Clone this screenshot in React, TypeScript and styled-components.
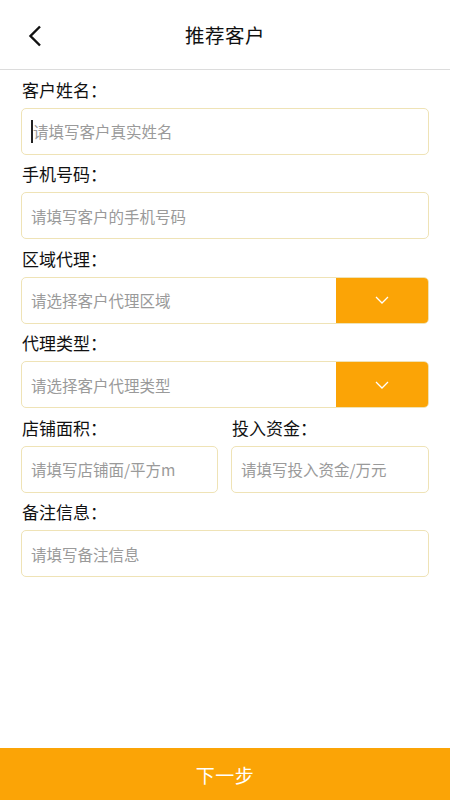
import React from "react";
import styled, { createGlobalStyle } from "styled-components";

const Global = createGlobalStyle`
  html, body { margin: 0; padding: 0; background: #fff; }
  body { font-family: "Noto Sans CJK SC", "Noto Sans", sans-serif; }
  * { box-sizing: border-box; }
`;

const Page = styled.div`
  width: 450px;
  height: 800px;
  display: flex;
  flex-direction: column;
  background: #fff;
`;

const Header = styled.header`
  height: 70px;
  flex-shrink: 0;
  display: flex;
  align-items: center;
  justify-content: center;
  position: relative;
  border-bottom: 1px solid #dcdcdc;
`;

const BackButton = styled.div`
  position: absolute;
  left: 26px;
  top: 23px;
  width: 18px;
  height: 26px;
  display: flex;
  align-items: center;
  justify-content: center;
`;

const Title = styled.h1`
  margin: 0;
  font-size: 19.5px;
  font-weight: 400;
  color: #111;
  letter-spacing: 0.5px;
  padding-bottom: 1px;
`;

const Form = styled.div`
  padding: 0 21px;
  display: flex;
  flex-direction: column;
`;

const Row = styled.div`
  display: grid;
  grid-template-columns: 197px 198px;
  column-gap: 13px;
`;

const Field = styled.div`
  display: flex;
  flex-direction: column;
`;

const Label = styled.div`
  height: 37.5px;
  display: flex;
  align-items: center;
  padding-left: 1px;
  padding-top: 1px;
  font-size: 17px;
  color: #111;
`;

const Box = styled.div`
  height: 47px;
  border: 1px solid #efe3b6;
  border-radius: 5px;
  display: flex;
  align-items: stretch;
  overflow: hidden;
  background: #fff;
`;

const Placeholder = styled.div`
  flex: 1;
  display: flex;
  align-items: center;
  padding-left: 9px;
  font-size: 15.5px;
  color: #9a9a9a;
  white-space: nowrap;
`;

const Caret = styled.span`
  display: inline-block;
  width: 2px;
  height: 23px;
  background: #222;
`;

const DropButton = styled.div`
  width: 92px;
  background: #fba406;
  display: flex;
  align-items: center;
  justify-content: center;
`;

const Footer = styled.div`
  margin-top: auto;
  height: 52px;
  background: #fba406;
  color: #fff;
  display: flex;
  align-items: center;
  justify-content: center;
  font-size: 19px;
  letter-spacing: 0.5px;
`;

const Chevron = () => (
  <svg width="14" height="8" viewBox="0 0 14 8">
    <path d="M1 1 L7 7 L13 1" fill="none" stroke="#fff" strokeWidth="1.3" />
  </svg>
);

const TextField = ({ label, placeholder, caret }: { label: string; placeholder: string; caret?: boolean }) => (
  <Field>
    <Label>{label}</Label>
    <Box>
      <Placeholder>
        {caret && <Caret />}
        {placeholder}
      </Placeholder>
    </Box>
  </Field>
);

const SelectField = ({ label, placeholder }: { label: string; placeholder: string }) => (
  <Field>
    <Label>{label}</Label>
    <Box>
      <Placeholder>{placeholder}</Placeholder>
      <DropButton>
        <Chevron />
      </DropButton>
    </Box>
  </Field>
);

export default function App() {
  return (
    <Page>
      <Global />
      <Header>
        <BackButton>
          <svg width="14" height="22" viewBox="0 0 14 22">
            <path d="M12 1.5 L2.5 11 L12 20.5" fill="none" stroke="#111" strokeWidth="2.4" />
          </svg>
        </BackButton>
        <Title>推荐客户</Title>
      </Header>
      <Form>
        <TextField label="客户姓名：" placeholder="请填写客户真实姓名" caret />
        <TextField label="手机号码：" placeholder="请填写客户的手机号码" />
        <SelectField label="区域代理：" placeholder="请选择客户代理区域" />
        <SelectField label="代理类型：" placeholder="请选择客户代理类型" />
        <Row>
          <TextField label="店铺面积：" placeholder="请填写店铺面/平方m" />
          <TextField label="投入资金：" placeholder="请填写投入资金/万元" />
        </Row>
        <TextField label="备注信息：" placeholder="请填写备注信息" />
      </Form>
      <Footer>下一步</Footer>
    </Page>
  );
}
